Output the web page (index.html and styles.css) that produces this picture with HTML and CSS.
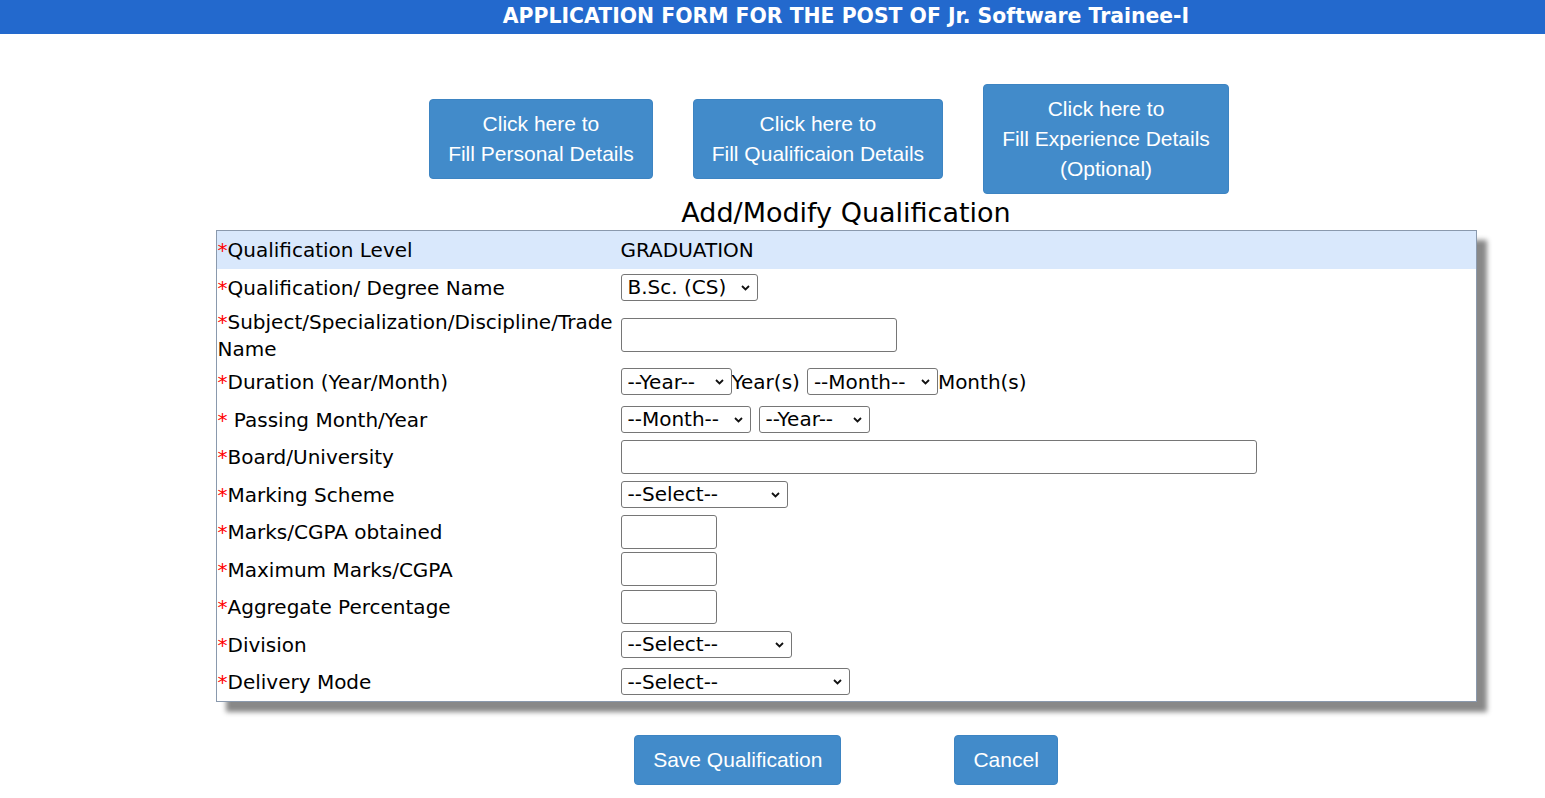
FILE: index.html
```html
<!DOCTYPE html>
<html lang="en">
<head>
<meta charset="utf-8">
<title>Application Form</title>
<link rel="stylesheet" href="styles.css">
</head>
<body>
<header class="topbar">APPLICATION FORM FOR THE POST OF Jr. Software Trainee-I</header>
<main class="page">
  <nav class="steps">
    <button class="btn step">Click here to<br>Fill Personal Details</button>
    <button class="btn step">Click here to<br>Fill Qualificaion Details</button>
    <button class="btn step">Click here to<br>Fill Experience Details<br>(Optional)</button>
  </nav>
  <h1 class="title">Add/Modify Qualification</h1>
  <form class="panel">
    <div class="row row-head">
      <div class="lbl"><span class="req">*</span>Qualification Level</div>
      <div class="val"><span class="plain">GRADUATION</span></div>
    </div>
    <div class="row">
      <div class="lbl"><span class="req">*</span>Qualification/ Degree Name</div>
      <div class="val"><span class="sel w137"><select><option>B.Sc. (CS)</option></select><svg class="chev" viewBox="0 0 9 6" width="9" height="6"><path d="M1 1 L4.5 4.5 L8 1" fill="none" stroke="#111" stroke-width="1.8"/></svg></span></div>
    </div>
    <div class="row">
      <div class="lbl"><span class="req">*</span>Subject/Specialization/Discipline/Trade Name</div>
      <div class="val"><input type="text" class="txt w276"></div>
    </div>
    <div class="row">
      <div class="lbl"><span class="req">*</span>Duration (Year/Month)</div>
      <div class="val">
        <span class="sel w111"><select><option>--Year--</option></select><svg class="chev" viewBox="0 0 9 6" width="9" height="6"><path d="M1 1 L4.5 4.5 L8 1" fill="none" stroke="#111" stroke-width="1.8"/></svg></span><span class="plain unit">Year(s)</span><span class="sel w131"><select><option>--Month--</option></select><svg class="chev" viewBox="0 0 9 6" width="9" height="6"><path d="M1 1 L4.5 4.5 L8 1" fill="none" stroke="#111" stroke-width="1.8"/></svg></span><span class="plain">Month(s)</span>
      </div>
    </div>
    <div class="row">
      <div class="lbl"><span class="req">*</span> Passing Month/Year</div>
      <div class="val">
        <span class="sel w130 gap8"><select><option>--Month--</option></select><svg class="chev" viewBox="0 0 9 6" width="9" height="6"><path d="M1 1 L4.5 4.5 L8 1" fill="none" stroke="#111" stroke-width="1.8"/></svg></span><span class="sel w111"><select><option>--Year--</option></select><svg class="chev" viewBox="0 0 9 6" width="9" height="6"><path d="M1 1 L4.5 4.5 L8 1" fill="none" stroke="#111" stroke-width="1.8"/></svg></span>
      </div>
    </div>
    <div class="row">
      <div class="lbl"><span class="req">*</span>Board/University</div>
      <div class="val"><input type="text" class="txt w636"></div>
    </div>
    <div class="row">
      <div class="lbl"><span class="req">*</span>Marking Scheme</div>
      <div class="val"><span class="sel w167"><select><option>--Select--</option></select><svg class="chev" viewBox="0 0 9 6" width="9" height="6"><path d="M1 1 L4.5 4.5 L8 1" fill="none" stroke="#111" stroke-width="1.8"/></svg></span></div>
    </div>
    <div class="row">
      <div class="lbl"><span class="req">*</span>Marks/CGPA obtained</div>
      <div class="val"><input type="text" class="txt w96"></div>
    </div>
    <div class="row">
      <div class="lbl"><span class="req">*</span>Maximum Marks/CGPA</div>
      <div class="val"><input type="text" class="txt w96"></div>
    </div>
    <div class="row">
      <div class="lbl"><span class="req">*</span>Aggregate Percentage</div>
      <div class="val"><input type="text" class="txt w96"></div>
    </div>
    <div class="row">
      <div class="lbl"><span class="req">*</span>Division</div>
      <div class="val"><span class="sel w171"><select><option>--Select--</option></select><svg class="chev" viewBox="0 0 9 6" width="9" height="6"><path d="M1 1 L4.5 4.5 L8 1" fill="none" stroke="#111" stroke-width="1.8"/></svg></span></div>
    </div>
    <div class="row">
      <div class="lbl"><span class="req">*</span>Delivery Mode</div>
      <div class="val"><span class="sel w229"><select><option>--Select--</option></select><svg class="chev" viewBox="0 0 9 6" width="9" height="6"><path d="M1 1 L4.5 4.5 L8 1" fill="none" stroke="#111" stroke-width="1.8"/></svg></span></div>
    </div>
  </form>
  <div class="actions">
    <button class="btn">Save Qualification</button>
    <button class="btn">Cancel</button>
  </div>
</main>
</body>
</html>
```

FILE: styles.css
```css
html, body {
  margin: 0;
  padding: 0;
  background: #ffffff;
}

body {
  font-family: "DejaVu Sans", Verdana, sans-serif;
  color: #000000;
}

.topbar {
  height: 34px;
  line-height: 32px;
  background: #2369cd;
  color: #ffffff;
  font-weight: bold;
  font-size: 20.4px;
  text-align: center;
  padding-left: 147px;
  box-sizing: border-box;
}

.page {
  padding-left: 147px;
}

.steps {
  display: flex;
  justify-content: center;
  align-items: center;
  gap: 40px;
  padding-right: 34px;
  margin-top: 50px;
}

.btn {
  font-family: "Liberation Sans", Arial, sans-serif;
  font-size: 21px;
  line-height: 30px;
  color: #ffffff;
  background: #428bca;
  border: 1px solid #3d84c2;
  border-radius: 4px;
  padding: 9px 18px;
  cursor: pointer;
}

.title {
  margin: 3px 0 2px;
  font-weight: normal;
  font-size: 27px;
  line-height: 31px;
  text-align: center;
}

.panel {
  width: 1261px;
  box-sizing: border-box;
  margin: 0 auto;
  border: 1px solid #8a99ad;
  box-shadow: 10px 10px 5px #888888;
  background: #ffffff;
  font-size: 20px;
}

.row {
  display: flex;
  align-items: center;
  min-height: 37.5px;
  padding: 0.5px 0;
  box-sizing: border-box;
}

.row-head {
  background: #d9e8fc;
}

.lbl {
  flex: 0 0 404px;
  box-sizing: border-box;
  padding: 2px 0 0 1px;
  line-height: 27px;
}

.req {
  color: #ff0000;
}

.val {
  display: flex;
  align-items: center;
  line-height: 27px;
}

.plain {
  padding-top: 2px;
}

.sel {
  position: relative;
  display: inline-flex;
}

.sel select {
  width: 100%;
  -webkit-appearance: none;
  appearance: none;
  font-family: "DejaVu Sans", Verdana, sans-serif;
  font-size: 20px;
  height: 27px;
  box-sizing: border-box;
  color: #000000;
  background: #ffffff;
  border: 1px solid #767676;
  border-radius: 3px;
  padding: 0 20px 0 6px;
  margin: 0;
}

.chev {
  position: absolute;
  right: 8px;
  top: 11px;
  pointer-events: none;
}

.txt {
  height: 34px;
  box-sizing: border-box;
  border: 1px solid #767676;
  border-radius: 3px;
  font-family: "DejaVu Sans", Verdana, sans-serif;
  font-size: 20px;
  padding: 0 4px;
  margin: 0;
}

.unit {
  margin-right: 7px;
}

.gap8 {
  margin-right: 8px;
}

.w96 { width: 96px; }
.w111 { width: 111px; }
.w130 { width: 130px; }
.w131 { width: 131px; }
.w137 { width: 137px; }
.w167 { width: 167px; }
.w171 { width: 171px; }
.w229 { width: 229px; }
.w276 { width: 276px; }
.w636 { width: 636px; }

.actions {
  display: flex;
  justify-content: center;
  gap: 113px;
  margin-top: 33px;
}
```
